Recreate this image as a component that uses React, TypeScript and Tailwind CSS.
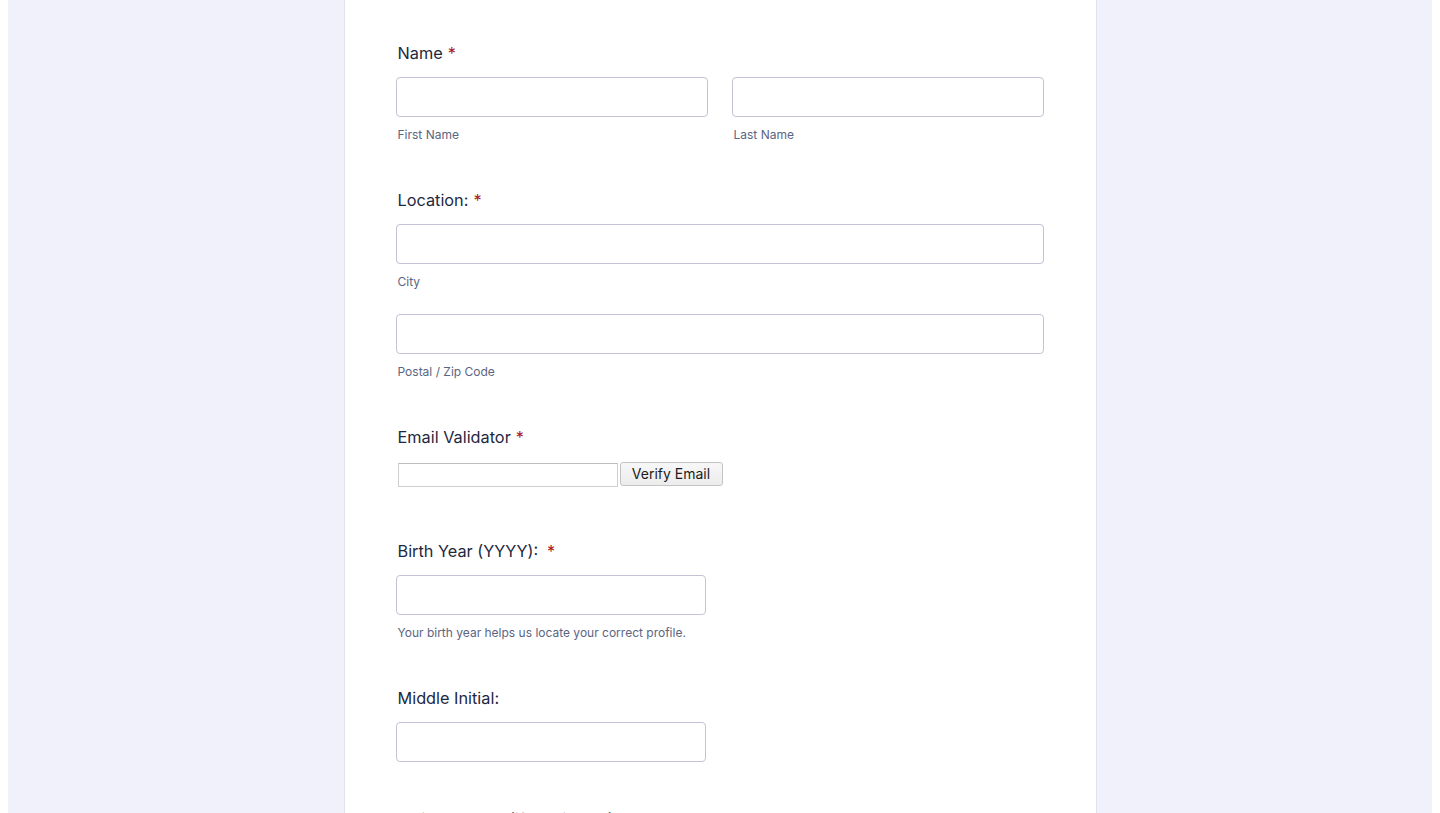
import React from 'react'

function Label({ text, required, extraGap }: { text: string; required?: boolean; extraGap?: boolean }) {
  return (
    <label className="block text-[16.3px] font-normal leading-6 text-[#1e2840]">
      {text}
      {required && (
        <span className={`text-[#a8201a] ${extraGap ? 'ml-[9px]' : 'ml-[5px]'}`}>*</span>
      )}
    </label>
  )
}

function TextInput({ className = '' }: { className?: string }) {
  return (
    <input
      type="text"
      className={`block h-10 rounded-[4px] border border-[#c3c3d6] bg-white px-3 text-[15px] outline-none ${className}`}
    />
  )
}

function Sub({ text }: { text: string }) {
  return <p className="mt-[9px] pl-[2px] text-[12px] leading-[18px] text-[#5b6582]">{text}</p>
}

export default function App() {
  return (
    <div className="h-[813px] overflow-hidden bg-white px-2 font-['Inter',sans-serif]">
      <div className="flex h-full justify-center bg-[#f1f1fb]">
        <div className="h-full w-[753px] border-x border-[#e2e2ee] bg-white pl-[51px] pr-[52px] pt-[41px]">
          {/* Name */}
          <div>
            <div className="pl-[2px]">
              <Label text="Name" required />
            </div>
            <div className="mt-3 grid grid-cols-2 gap-6">
              <div>
                <TextInput className="w-full" />
                <Sub text="First Name" />
              </div>
              <div>
                <TextInput className="w-full" />
                <Sub text="Last Name" />
              </div>
            </div>
          </div>

          {/* Location */}
          <div className="mt-[44px]">
            <div className="pl-[2px]">
              <Label text="Location:" required />
            </div>
            <div className="mt-3">
              <TextInput className="w-full" />
              <Sub text="City" />
            </div>
            <div className="mt-[23px]">
              <TextInput className="w-full" />
              <Sub text="Postal / Zip Code" />
            </div>
          </div>

          {/* Email validator */}
          <div className="mt-[44px] pl-[2px]">
            <Label text="Email Validator" required />
            <div className="mt-[13px] flex items-start gap-[2px]">
              <input
                type="text"
                className="mt-px h-6 w-[220px] border border-[#cfcfcf] border-t-[#bdbdbd] bg-white px-1 text-[13px] outline-none"
              />
              <button
                type="button"
                className="h-6 w-[103px] rounded-[3px] border border-[#c4c4c4] bg-gradient-to-b from-[#f7f7f7] to-[#ececec] text-[14px] leading-none text-[#1c1c1c]"
              >
                Verify Email
              </button>
            </div>
          </div>

          {/* Birth year */}
          <div className="mt-[52px]">
            <div className="pl-[2px]">
              <Label text="Birth Year (YYYY):" required extraGap />
            </div>
            <div className="mt-3">
              <TextInput className="w-[310px]" />
              <Sub text="Your birth year helps us locate your correct profile." />
            </div>
          </div>

          {/* Middle initial */}
          <div className="mt-[44px]">
            <div className="pl-[2px]">
              <Label text="Middle Initial:" />
            </div>
            <div className="mt-3">
              <TextInput className="w-[310px]" />
            </div>
          </div>

          {/* Maiden name, cut off by the window */}
          <div className="mt-[45px] pl-[2px]">
            <Label text="Maiden Name (if applicable):" />
            <div className="mt-3">
              <TextInput className="w-[310px]" />
            </div>
          </div>
        </div>
      </div>
    </div>
  )
}
